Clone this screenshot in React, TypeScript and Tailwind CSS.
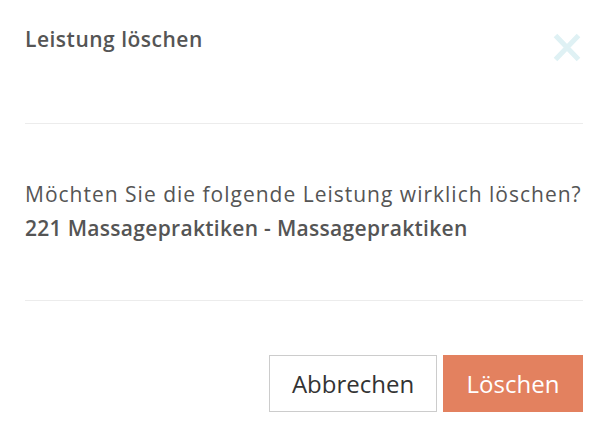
import React from "react";

export default function App() {
  return (
    <div
      className="w-[605px] h-[430px] bg-white flex flex-col pl-[25px] pr-[22px] text-[#555555]"
      style={{ fontFamily: "'Open Sans', sans-serif" }}
    >
      <div className="h-[124px] shrink-0 flex items-start justify-between border-b border-[#ececec] pt-[25px]">
        <h2 className="text-[21px] leading-[28px] font-semibold tracking-[0.5px]">Leistung löschen</h2>
        <button className="mt-[8px] mr-[2px] text-[#dff1f4]" aria-label="close">
          <svg width="28" height="29" viewBox="0 0 28 29">
            <path d="M2.5 2.5 L25.5 26.5 M25.5 2.5 L2.5 26.5" stroke="currentColor" strokeWidth="5" strokeLinecap="butt" />
          </svg>
        </button>
      </div>
      <div className="h-[177px] shrink-0 border-b border-[#ececec] pt-[53px]">
        <p className="text-[21px] leading-[34px] tracking-[1px] whitespace-nowrap">
          Möchten Sie die folgende Leistung wirklich löschen?
        </p>
        <p className="text-[21px] leading-[34px] font-semibold tracking-[0.3px] whitespace-nowrap">
          221 Massagepraktiken - Massagepraktiken
        </p>
      </div>
      <div className="flex justify-end gap-[6px] pt-[54px]">
        <button className="w-[168px] h-[57px] border border-[#cccccc] bg-white text-[24px] text-[#333333] flex items-center justify-center">
          Abbrechen
        </button>
        <button className="w-[140px] h-[57px] bg-[#e3815f] text-[24px] text-white flex items-center justify-center">
          Löschen
        </button>
      </div>
    </div>
  );
}
